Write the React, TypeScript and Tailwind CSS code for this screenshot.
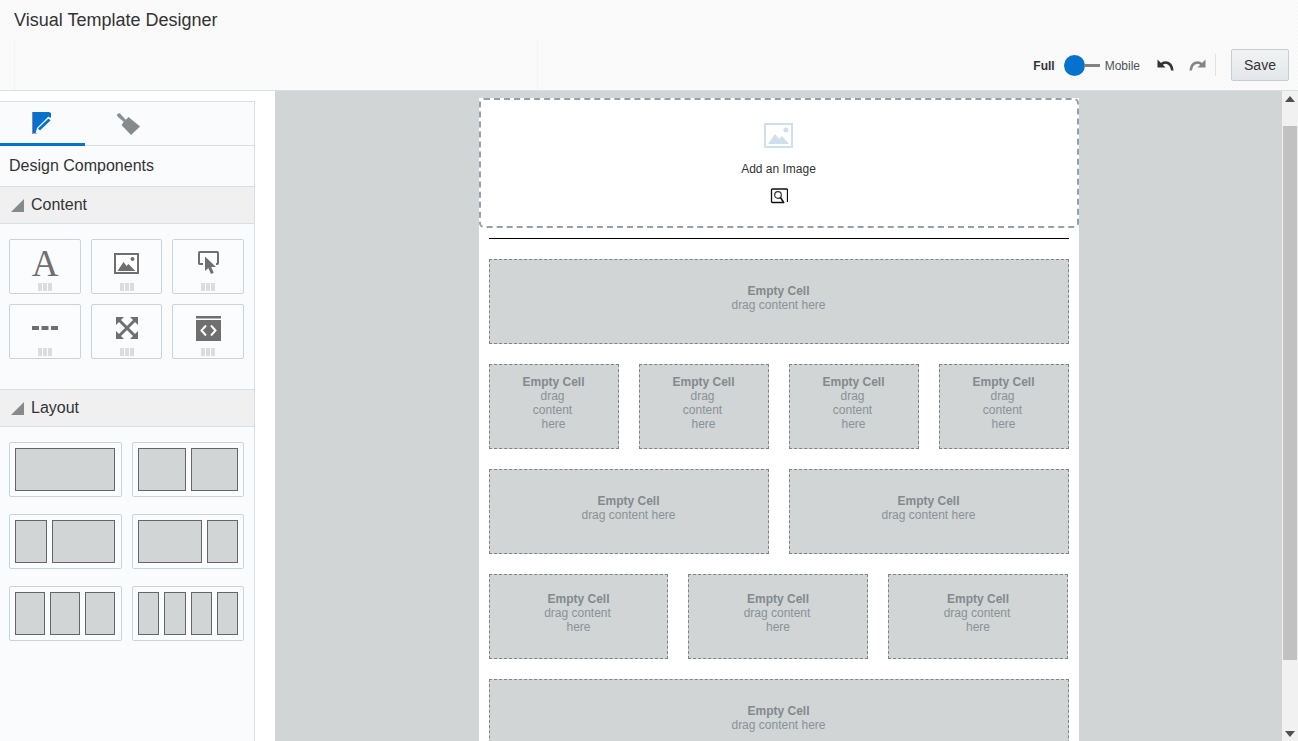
import React from 'react'

const FONT = "font-['Liberation_Sans',Arial,sans-serif]"

function Grip() {
  return (
    <div className="flex gap-px">
      <span className="h-[8px] w-[4px] bg-[#dcdcdc]" />
      <span className="h-[8px] w-[4px] bg-[#dcdcdc]" />
      <span className="h-[8px] w-[4px] bg-[#dcdcdc]" />
    </div>
  )
}

function Tile({ children }: { children: React.ReactNode }) {
  return (
    <div className="flex h-[55px] flex-col items-center rounded-[2px] border border-[#c4d5e0] bg-[#fbfcfe]">
      <div className="flex h-[43px] items-center justify-center pt-[3px]">{children}</div>
      <Grip />
    </div>
  )
}

function SectionHeader({ title }: { title: string }) {
  return (
    <div className="flex h-[38px] items-center border-y border-[#d6dfe6] bg-[#f0f0f0] pl-[11px] text-[16px] text-[#333]">
      <svg width="13" height="13" viewBox="0 0 13 13" className="mr-[7px]">
        <path d="M13 0v13H0z" fill="#858a8c" />
      </svg>
      {title}
    </div>
  )
}

function LayoutTile({ cols, wide }: { cols: string[]; wide?: boolean }) {
  return (
    <div className={`flex h-[55px] gap-[5px] rounded-[2px] border border-[#c4d5e0] bg-[#fbfcfe] p-[5px] ${wide ? 'pr-[6px]' : ''}`}>
      {cols.map((c, i) => (
        <div key={i} className={`border border-[#666] bg-[#d1d5d6] ${c}`} />
      ))}
    </div>
  )
}

function Cell({ width, narrow }: { width: string; narrow?: 'two' | 'three' }) {
  return (
    <div className={`flex h-[85px] flex-col items-center justify-center border border-dashed border-[#7d8487] bg-[#d1d5d6] pb-[8px] text-center text-[12px] leading-[14px] text-[#8a9296] ${narrow === 'two' ? 'pl-[1px]' : ''} ${width}`}>
      <div className="font-bold text-[#83898c]">Empty Cell</div>
      {narrow === 'three' ? (
        <>
          <div className="pr-[2px]">drag</div>
          <div className="pr-[2px]">content</div>
          <div>here</div>
        </>
      ) : narrow === 'two' ? (
        <>
          <div className="pr-[2px]">drag content</div>
          <div>here</div>
        </>
      ) : (
        <div>drag content here</div>
      )}
    </div>
  )
}

function UndoArrow({ color, className }: { color: string; className: string }) {
  return (
    <svg width="17" height="15" viewBox="0 0 17 15" className={className}>
      <path d="M0.500 1.500v8h8z" fill={color} />
      <path d="M4 6.500C8 2.800 14.500 4 15.300 12.500" fill="none" stroke={color} strokeWidth="2.600" />
    </svg>
  )
}

export default function App() {
  return (
    <div className={`flex h-[741px] w-[1298px] flex-col overflow-hidden bg-white ${FONT}`}>
      <header className="h-[91px] shrink-0 border-b border-[#d6dfe8] bg-[#fafafa] bg-[repeating-linear-gradient(135deg,#f7f7f7_0,#f7f7f7_1.4142px,#fcfcfc_1.4142px,#fcfcfc_2.8284px)]">
        <div className="flex h-[40px] items-center pl-[14px] text-[18px] text-[#333]">Visual Template Designer</div>
        <div className="flex h-[50px] items-start">
          <div className="ml-[14px] h-full w-[524px] border-x border-[#f4f4f4]" />
          <div className="ml-auto flex h-full items-center pr-[9px]">
            <span className="mr-[9px] pt-[1px] text-[12px] font-bold text-[#333]">Full</span>
            <div className="flex items-center">
              <span className="h-[21px] w-[21px] rounded-full bg-[#0572ce]" />
              <span className="-ml-px h-[3px] w-[16px] bg-[#808487]" />
            </div>
            <span className="ml-[5px] pt-[1px] text-[12px] text-[#4f5358]">Mobile</span>
            <UndoArrow color="#333" className="ml-[17px]" />
            <UndoArrow color="#858585" className="ml-[15px] -scale-x-100" />
            <span className="ml-[9px] h-[22px] w-px bg-[#dde3e8]" />
            <button className="ml-[15px] h-[32px] w-[58px] rounded-[2px] border border-[#c4ced7] bg-gradient-to-b from-[#f1f3f3] to-[#e3e7e9] text-[14px] text-[#333]">
              Save
            </button>
          </div>
        </div>
      </header>

      <div className="flex min-h-0 flex-1">
        <aside className="mr-[20px] w-[255px] shrink-0 pt-[10px]">
          <div className="h-full border-r border-t border-[#d6dfe6] bg-[#f9fbfd]">
            <div className="flex h-[44px] border-b border-[#d6dfe6]">
              <div className="flex h-[44px] w-[85px] items-center justify-center border-b-[3px] border-[#0572ce] pr-[1px]">
                <svg width="21" height="22" viewBox="0 0 21 22">
                  <path d="M0 0h17l2 1v4L6 19l-1 2.500H0z" fill="#0572ce" />
                  <path d="M0 0h1v21.500H0z" fill="#8a7fc0" />
                  <path d="M16.500 4.500l4 4L9 20l-5.500 1.500L5 16z" fill="#fff" />
                  <path d="M16.500 6.500l2 2L8 18.500l-2-2z" fill="#0572ce" />
                </svg>
              </div>
              <div className="flex w-[85px] items-center justify-center">
                <svg width="24" height="24" viewBox="0 0 24 24">
                  <path d="M1 3.500C1 1.800 2.500 1 4 1.500L10 8 8 10 2.500 5.500z" fill="#8a8f92" />
                  <path d="M7 11 11 7l2 1.500L8.500 13z" fill="#6b7073" />
                  <path d="M12.500 5 24 14.500 15 23 5.500 13z" fill="#858a8c" />
                </svg>
              </div>
            </div>
            <div className="flex h-[40px] items-center pl-[9px] text-[16px] text-[#333]">Design Components</div>
            <SectionHeader title="Content" />
            <div className="grid h-[165px] grid-cols-[72px_71px_72px] content-start gap-x-[10px] gap-y-[10px] pl-[9px] pt-[15px]">
              <Tile>
                <span className="font-['Liberation_Serif',serif] text-[37px] leading-none text-[#6f6f6f]">A</span>
              </Tile>
              <Tile>
                <svg width="25" height="21" viewBox="0 0 25 21">
                  <path d="M1 1h23v19H1z" fill="#fff" stroke="#6f6f6f" strokeWidth="2" />
                  <path d="M3.500 18l6-9 3 4 2-2 7 7z" fill="#6f6f6f" />
                  <circle cx="18.500" cy="6" r="2" fill="#6f6f6f" />
                </svg>
              </Tile>
              <Tile>
                <svg width="21" height="24" viewBox="0 0 21 24">
                  <path d="M5 13H1.800a.8.8 0 0 1-.8-.8V1.800a.8.8 0 0 1 .8-.8h17.400a.8.8 0 0 1 .8.800v10.400a.8.8 0 0 1-.8.8H18" fill="none" stroke="#6f6f6f" strokeWidth="2" />
                  <path d="M7 5.500v14.500l3.300-3 2.700 6 2.800-1.300-2.700-5.700H18z" fill="#6f6f6f" />
                </svg>
              </Tile>
              <Tile>
                <svg width="26" height="4" viewBox="0 0 26 4">
                  <path d="M0 0h7v4H0zM9.500 0h7v4h-7zM19 0h7v4h-7z" fill="#6f6f6f" />
                </svg>
              </Tile>
              <Tile>
                <svg width="22" height="22" viewBox="0 0 22 22">
                  <path d="M0 0h8L0 8zM22 0v8l-8-8zM0 22v-8l8 8zM22 22h-8l8-8z" fill="#6f6f6f" />
                  <path d="M3 3l16 16M19 3 3 19" stroke="#6f6f6f" strokeWidth="3" />
                </svg>
              </Tile>
              <Tile>
                <svg width="25" height="25" viewBox="0 0 25 25">
                  <path d="M0 0h25v2.500H0zM0 4h25v21H0z" fill="#6f6f6f" />
                  <path d="M10 9.500 5.500 14.500l4.500 5M15 9.500l4.500 5-4.500 5" fill="none" stroke="#fff" strokeWidth="2" />
                </svg>
              </Tile>
            </div>
            <SectionHeader title="Layout" />
            <div className="grid grid-cols-[113px_112px] gap-x-[10px] gap-y-[17px] pl-[9px] pt-[15px]">
              <LayoutTile wide cols={['flex-1']} />
              <LayoutTile cols={['flex-1', 'flex-1']} />
              <LayoutTile wide cols={['w-[32px]', 'flex-1']} />
              <LayoutTile cols={['flex-1', 'w-[31px]']} />
              <LayoutTile wide cols={['flex-1', 'flex-1', 'flex-1']} />
              <LayoutTile cols={['flex-1', 'flex-1', 'flex-1', 'flex-1']} />
            </div>
          </div>
        </aside>

        <main className="flex min-w-0 flex-1 justify-center overflow-hidden bg-[#d1d5d6] pt-[7px]">
          <div className="h-[700px] w-[600px] shrink-0 bg-white">
            <div className="flex h-[130px] flex-col items-center rounded-[5px] border-2 border-dashed border-[#93a1ac] pt-[23px]">
              <svg width="29" height="25" viewBox="0 0 29 25">
                <path d="M1 1h27v23H1z" fill="#fff" stroke="#cfdfeb" strokeWidth="2" />
                <path d="M4 21l7-10 4 5 3-3 7 8z" fill="#cfdfeb" />
                <circle cx="22" cy="7" r="2.500" fill="#cfdfeb" />
              </svg>
              <div className="mt-[14px] text-[12px] leading-[14px] text-[#333]">Add an Image</div>
              <svg width="18" height="17" viewBox="0 0 18 17" className="mt-[12px]">
                <path d="M13 14.500H2.500a1 1 0 0 1-1-1V2a1 1 0 0 1 1-1h14a1 1 0 0 1 1 1v12" fill="#fff" stroke="#111" strokeWidth="1.300" />
                <circle cx="8" cy="7" r="3.300" fill="none" stroke="#333" strokeWidth="1.200" />
                <path d="M10.500 9.500 14 15" stroke="#111" strokeWidth="1.500" />
              </svg>
            </div>
            <div className="mx-[10px] mt-[10px] flex flex-col gap-[20px]">
              <div className="h-px bg-black" />
              <Cell width="w-full" />
              <div className="flex justify-between">
                <Cell width="w-[130px]" narrow="three" />
                <Cell width="w-[130px]" narrow="three" />
                <Cell width="w-[130px]" narrow="three" />
                <Cell width="w-[130px]" narrow="three" />
              </div>
              <div className="flex justify-between">
                <Cell width="w-[280px]" />
                <Cell width="w-[280px]" />
              </div>
              <div className="flex gap-[20px]">
                <Cell width="w-[179px]" narrow="two" />
                <Cell width="w-[180px]" narrow="two" />
                <Cell width="w-[180px]" narrow="two" />
              </div>
              <Cell width="w-full" />
            </div>
          </div>
        </main>

        <div className="flex w-[16px] shrink-0 flex-col items-center bg-[#f1f1f1]">
          <svg width="10" height="6" viewBox="0 0 10 6" className="mt-[5px]">
            <path d="M5 0l5 6H0z" fill="#505050" />
          </svg>
          <div className="mt-[24px] h-[534px] w-[14px] bg-[#c1c1c1]" />
          <svg width="10" height="6" viewBox="0 0 10 6" className="mt-[71px]">
            <path d="M5 6l5-6H0z" fill="#505050" />
          </svg>
        </div>
      </div>
    </div>
  )
}
